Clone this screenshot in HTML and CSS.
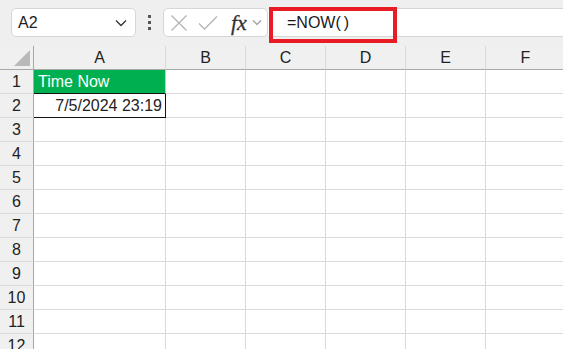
FILE: index.html
```html
<!DOCTYPE html>
<html lang="en">
<head>
    <meta charset="UTF-8">
    <title>NOW function</title>
    <link rel="stylesheet" href="styles.css">
</head>
<body>

    <!-- Name box + formula bar -->
    <div class="toolbar">
        <div class="namebox">
            <span>A2</span>
            <svg class="chev" width="12" height="8" viewBox="0 0 12 8"><path d="M1 1.5 L6 6.5 L11 1.5" fill="none" stroke="#333" stroke-width="1.3"/></svg>
        </div>
        <div class="grip"><i></i><i></i><i></i></div>
        <div class="fxbox">
            <svg width="18" height="18" viewBox="0 0 18 18"><path d="M1.5 1.5 L16.5 16.5 M16.5 1.5 L1.5 16.5" stroke="#b4b4b4" stroke-width="1.3" fill="none"/></svg>
            <svg width="20" height="16" viewBox="0 0 20 16"><path d="M1 8.5 L6.5 14 L19 1.5" stroke="#b4b4b4" stroke-width="1.3" fill="none"/></svg>
            <span class="fx">fx</span>
            <svg width="10" height="7" viewBox="0 0 10 7"><path d="M1 1.5 L5 5.5 L9 1.5" fill="none" stroke="#999" stroke-width="1.2"/></svg>
        </div>
        <div class="formula">
            <span class="formula-text">=NOW(<span class="paren">)</span></span>
            <div class="highlight"></div>
        </div>
    </div>

    <!-- Sheet -->
    <div class="sheet">
        <div class="row head">
            <div class="corner"><span class="tri"></span></div>
            <div class="col">A</div><div class="col">B</div><div class="col">C</div><div class="col">D</div><div class="col">E</div><div class="col">F</div>
        </div>
        <div class="row">
            <div class="num">1</div>
            <div class="cell title">Time Now</div><div class="cell"></div><div class="cell"></div><div class="cell"></div><div class="cell"></div><div class="cell"></div>
        </div>
        <div class="row">
            <div class="num">2</div>
            <div class="cell value">7/5/2024 23:19</div><div class="cell"></div><div class="cell"></div><div class="cell"></div><div class="cell"></div><div class="cell"></div>
        </div>
        <div class="row"><div class="num">3</div><div class="cell"></div><div class="cell"></div><div class="cell"></div><div class="cell"></div><div class="cell"></div><div class="cell"></div></div>
        <div class="row"><div class="num">4</div><div class="cell"></div><div class="cell"></div><div class="cell"></div><div class="cell"></div><div class="cell"></div><div class="cell"></div></div>
        <div class="row"><div class="num">5</div><div class="cell"></div><div class="cell"></div><div class="cell"></div><div class="cell"></div><div class="cell"></div><div class="cell"></div></div>
        <div class="row"><div class="num">6</div><div class="cell"></div><div class="cell"></div><div class="cell"></div><div class="cell"></div><div class="cell"></div><div class="cell"></div></div>
        <div class="row"><div class="num">7</div><div class="cell"></div><div class="cell"></div><div class="cell"></div><div class="cell"></div><div class="cell"></div><div class="cell"></div></div>
        <div class="row"><div class="num">8</div><div class="cell"></div><div class="cell"></div><div class="cell"></div><div class="cell"></div><div class="cell"></div><div class="cell"></div></div>
        <div class="row"><div class="num">9</div><div class="cell"></div><div class="cell"></div><div class="cell"></div><div class="cell"></div><div class="cell"></div><div class="cell"></div></div>
        <div class="row"><div class="num">10</div><div class="cell"></div><div class="cell"></div><div class="cell"></div><div class="cell"></div><div class="cell"></div><div class="cell"></div></div>
        <div class="row"><div class="num">11</div><div class="cell"></div><div class="cell"></div><div class="cell"></div><div class="cell"></div><div class="cell"></div><div class="cell"></div></div>
        <div class="row"><div class="num">12</div><div class="cell"></div><div class="cell"></div><div class="cell"></div><div class="cell"></div><div class="cell"></div><div class="cell"></div></div>
    </div>

</body>
</html>
```

FILE: styles.css
```css
/* Reset */
* {
    margin: 0;
    padding: 0;
    box-sizing: border-box;
}

body {
    font-family: "Liberation Sans", Arial, sans-serif;
    font-size: 16px;
    color: #222;
    background-color: #efefef;
    width: 563px;
    height: 349px;
    overflow: hidden;
}

/* Toolbar */
.toolbar {
    height: 46px;
    padding-top: 8px;
    display: flex;
    align-items: flex-start;
}

.namebox {
    margin-left: 11px;
    width: 125px;
    height: 29px;
    background-color: white;
    border: 1px solid #d6d6d6;
    border-radius: 5px;
    display: flex;
    align-items: center;
    justify-content: space-between;
    padding: 0 8px 0 6px;
}

.grip {
    width: 27px;
    height: 29px;
    display: flex;
    flex-direction: column;
    align-items: center;
    justify-content: center;
    gap: 3px;
}

.grip i {
    display: block;
    width: 3px;
    height: 3px;
    background-color: #555;
}

.fxbox {
    width: 105px;
    height: 29px;
    background-color: white;
    border: 1px solid #d6d6d6;
    border-radius: 5px;
    display: flex;
    align-items: center;
    padding-left: 6px;
    gap: 10px;
}

.fxbox .fx {
    font-family: "Liberation Serif", "Times New Roman", serif;
    font-style: italic;
    font-size: 22px;
    color: #333;
    margin-left: 3px;
    margin-right: -5px;
    -webkit-text-stroke: 0.3px #333;
}

/* Formula bar */
.formula {
    flex: 1;
    height: 29px;
    background-color: white;
    border-top: 1px solid #d6d6d6;
    border-bottom: 1px solid #d6d6d6;
    position: relative;
    display: flex;
    align-items: center;
    padding-left: 19px;
}

.formula-text {
    color: #1a1a1a;
}

.formula-text .paren {
    margin-left: 3px;
}

.highlight {
    position: absolute;
    top: -2px;
    left: 1px;
    width: 128px;
    height: 36px;
    border: 4px solid #e81c24;
}

/* Grid */
.row {
    display: grid;
    grid-template-columns: 34px 132px 80px 80px 80px 80px 80px;
    height: 24px;
}

.row > div {
    border-right: 1px solid #dadada;
    border-bottom: 1px solid #dadada;
    background-color: white;
}

.row.head > div {
    background-color: #f0f0f0;
    border-bottom: 1px solid #a8a8a8;
}

.col {
    display: flex;
    align-items: center;
    justify-content: center;
    color: #222;
}

.row.head .corner {
    position: relative;
    border-right: 1px solid #a8a8a8;
}

.tri {
    position: absolute;
    right: 3px;
    bottom: 3px;
    width: 0;
    height: 0;
    border-left: 16px solid transparent;
    border-bottom: 16px solid #b9b9b9;
}

.row > .num {
    background-color: #f0f0f0;
    border-right: 1px solid #a8a8a8;
    display: flex;
    align-items: center;
    justify-content: center;
}

.cell {
    display: flex;
    align-items: center;
    padding: 0 4px;
}

.row > .title {
    background-color: #00b050;
    color: white;
    border-right-color: #c8c8c8;
    border-bottom: 1px solid #111;
}

.row > .value {
    justify-content: flex-end;
    border-right: 1px solid #111;
    border-bottom: 1px solid #111;
    padding-right: 3px;
}
```
